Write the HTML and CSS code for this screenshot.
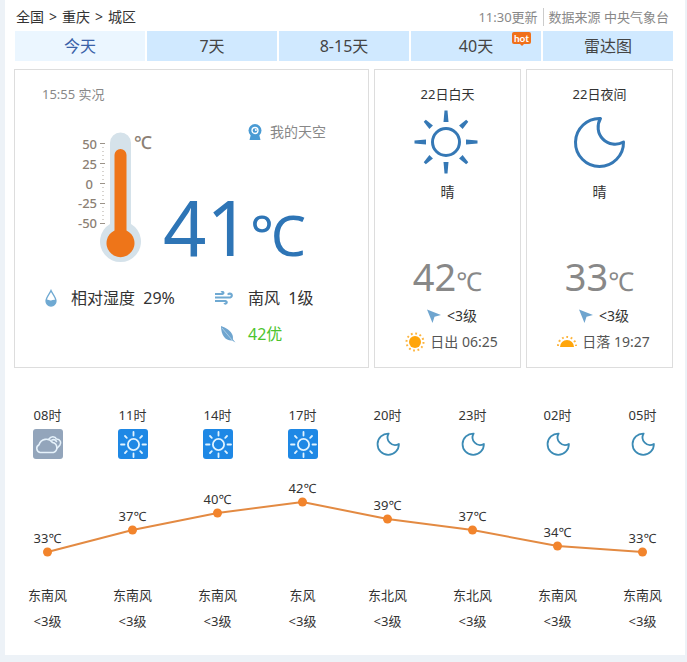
FILE: index.html
```html
<!doctype html>
<html lang="zh-CN">
	<head>
		<meta charset="utf-8" />
		<meta name="viewport" content="width=device-width, initial-scale=1" />
		<title>重庆天气</title>
		<link rel="stylesheet" href="styles.css">
	</head>
	<body>
		<!-- shared icon shapes -->
		<svg class="defs" width="0" height="0">
			<symbol id="sun" viewBox="-32 -32 64 64">
				<circle r="13.5" fill="none" stroke="currentColor" stroke-width="3" />
				<g fill="currentColor">
					<path id="ray" d="M-1.500-31.500h3l1 11.500h-5z" />
					<use href="#ray" transform="rotate(90)" />
					<use href="#ray" transform="rotate(180)" />
					<use href="#ray" transform="rotate(270)" />
					<path id="ray2" d="M-1.500-30h3l1 9h-5z" transform="rotate(45)" />
					<use href="#ray2" transform="rotate(90)" />
					<use href="#ray2" transform="rotate(180)" />
					<use href="#ray2" transform="rotate(270)" />
				</g>
			</symbol>
			<symbol id="moon" viewBox="-27 -27 54 54">
				<path d="M1.500-23.500A24 24 0 1 0 24.500 0A17 17 0 0 1 1.500-23.500z" fill="none" stroke="currentColor" stroke-width="3" stroke-linejoin="round" />
			</symbol>
			<symbol id="moon-thin" viewBox="-27 -27 54 54">
				<path d="M1.500-23.500A24 24 0 1 0 24.500 0A17 17 0 0 1 1.500-23.500z" fill="none" stroke="currentColor" stroke-width="4" stroke-linejoin="round" />
			</symbol>
			<symbol id="sun-tile" viewBox="0 0 30 30">
				<rect width="30" height="30" rx="3" fill="#1e88e5" />
				<g transform="translate(15.500 15.500)" fill="none" stroke="#e0f3ff" stroke-width="1.800" stroke-linecap="round">
					<circle r="5.600" />
					<path d="M0-12.500v3.500M0 12.500v-3.500M-12.500 0h3.500M12.500 0h-3.500M-8.500-8.500l1.800 1.800M8.500-8.500l-1.800 1.800M-8.500 8.500l1.800-1.800M8.500 8.500l-1.800-1.800" />
				</g>
			</symbol>
			<symbol id="cloud-tile" viewBox="0 0 30 30">
				<rect width="30" height="30" rx="3" fill="#93a5bb" />
				<g fill="none" stroke="#e6f2fb" stroke-width="1.600" stroke-linejoin="round" stroke-linecap="round">
					<path d="M7 23.500a4.200 4.200 0 0 1-1-7.800a7.600 7.600 0 0 1 13.500-2.200a5.200 5.200 0 0 1 1 10z" />
					<path d="M16 10c1.800-2.800 6-3 7.500 0c3.800.2 5.300 3.700 3.300 6.300l-2.300 2.500" />
					<path d="M19 11c2-.8 3.500-.2 4.500 1.500" />
				</g>
			</symbol>
			<symbol id="arrow" viewBox="0 0 16 16">
				<path d="M1 1.500l14 5.500-6.500 1.800L6.500 15z" fill="#6fa5cf" />
			</symbol>
		</svg>

		<div class="panel">
			<header class="top">
				<div class="crumbs">
					<a href="#">全国</a><span>&gt;</span><a href="#">重庆</a><span>&gt;</span><a href="#">城区</a>
				</div>
				<div class="source"><span class="updated">11:30更新</span>数据来源 中央气象台</div>
			</header>

			<nav class="tabs">
				<a class="active" href="#">今天</a>
				<a href="#">7天</a>
				<a href="#">8-15天</a>
				<a href="#">40天<span class="hot">hot</span></a>
				<a href="#">雷达图</a>
			</nav>

			<div class="cards">
				<section class="card now">
					<p class="time">15:55 实况</p>
					<div class="reading">
						<svg class="thermometer" viewBox="0 0 88 136" width="88" height="136">
							<path d="M40 12a10.500 10.500 0 0 1 21 0v81a20.500 20.500 0 1 1-21 0z" fill="#d5e2ea" />
							<path d="M44.500 24a6 6 0 0 1 12 0v75.500a14 14 0 1 1-12 0z" fill="#ee7519" />
							<g stroke="#9b9389" stroke-width="1">
								<path d="M30 12.500h5M30 32.500h5M30 52.500h5M30 72.500h5M30 92.500h5" />
								<path d="M32 16.500h2M32 20.500h2M32 24.500h2M32 28.500h2M32 36.500h2M32 40.500h2M32 44.500h2M32 48.500h2M32 56.500h2M32 60.500h2M32 64.500h2M32 68.500h2M32 76.500h2M32 80.500h2M32 84.500h2M32 88.500h2" opacity=".4" />
							</g>
							<g class="scale">
								<text x="27" y="18">50</text>
								<text x="27" y="38">25</text>
								<text x="23" y="58">0</text>
								<text x="27" y="77">-25</text>
								<text x="27" y="97">-50</text>
							</g>
							<text class="unit" x="64" y="18">℃</text>
						</svg>
						<div class="value">
							<a class="sky" href="#">
								<svg viewBox="0 0 14 16" width="14" height="16">
									<path d="M3 10h8l1.500 6h-11z" fill="#4a9bd4" />
									<circle cx="7" cy="6.500" r="6.500" fill="#4a9bd4" />
									<circle cx="7" cy="6.500" r="3" fill="#4a9bd4" stroke="#fff" stroke-width="1.300" />
									<circle cx="7.800" cy="6" r="1" fill="#fff" />
								</svg>
								我的天空
							</a>
							<div class="big">41<small>℃</small></div>
						</div>
					</div>
					<div class="details">
						<div class="item">
							<svg viewBox="0 0 12 18" width="12" height="18">
								<path d="M6 1.500C4.500 5 1 8.500 1 12a5 5 0 0 0 10 0C11 8.500 7.500 5 6 1.500z" fill="#fff" stroke="#6fa9d2" stroke-width="1.300" />
								<path d="M1 11c1.800-1.300 3 1 5 .5c1.600-.4 3-1.300 5-.5v1a5 5 0 0 1-10 0z" fill="#6fa9d2" />
							</svg>
							<span>相对湿度&nbsp; 29%</span>
						</div>
						<div class="item">
							<svg viewBox="0 0 19 14" width="19" height="14">
								<g fill="none" stroke="#6fa9d2" stroke-width="2.200">
									<path d="M0 3h7.500a1 1 0 1 0-1-1.500" />
									<path d="M0 6.500h15.200a2 2 0 1 0-2.200-2.800" />
									<path d="M0 10h10.500a1.300 1.300 0 1 1-1.200 2" />
								</g>
							</svg>
							<span>南风&nbsp; 1级</span>
						</div>
						<div class="item air">
							<svg viewBox="0 0 16 17" width="16" height="17">
								<path d="M1 0c5 1.500 10 5 11.500 9c.8 2.200.3 3.800.5 4.500l2.500 3-3.500-2C6 15 1 10 1 0z" fill="#6fa5cf" />
								<path d="M2 2l10.500 12.500" stroke="#b9d6ea" stroke-width=".8" />
							</svg>
							<a href="#">42优</a>
						</div>
					</div>
				</section>

				<section class="card half">
					<h2>22日白天</h2>
					<svg class="weather" width="64" height="64"><use href="#sun" /></svg>
					<p class="desc">晴</p>
					<p class="temp">42<small>℃</small></p>
					<p class="wind"><svg width="16" height="16"><use href="#arrow" /></svg>&lt;3级</p>
					<p class="rise">
						<svg viewBox="-10 -10 20 20" width="20" height="20">
							<circle r="6" fill="#ffa50a" />
							<circle r="8.500" fill="none" stroke="#fdb43c" stroke-width="2" stroke-dasharray="1.800 2.650" />
						</svg>
						日出 06:25
					</p>
				</section>

				<section class="card half">
					<h2>22日夜间</h2>
					<svg class="weather" width="64" height="64" viewBox="0 0 64 64"><use href="#moon" x="6" y="5" width="54" height="54" /></svg>
					<p class="desc">晴</p>
					<p class="temp">33<small>℃</small></p>
					<p class="wind"><svg width="16" height="16"><use href="#arrow" /></svg>&lt;3级</p>
					<p class="rise">
						<svg viewBox="-10 -10 20 20" width="20" height="20">
							<path d="M-7 5a7 7 0 0 1 14 0z" fill="#ffa50a" />
							<path d="M-9 4a9 9 0 0 1 18 0" fill="none" stroke="#fdb43c" stroke-width="2" stroke-dasharray="1.800 2.650" />
						</svg>
						日落 19:27
					</p>
				</section>
			</div>

			<div class="hourly">
				<ul class="hours">
					<li>08时<svg width="30" height="30"><use href="#cloud-tile" /></svg></li>
					<li>11时<svg width="30" height="30"><use href="#sun-tile" /></svg></li>
					<li>14时<svg width="30" height="30"><use href="#sun-tile" /></svg></li>
					<li>17时<svg width="30" height="30"><use href="#sun-tile" /></svg></li>
					<li>20时<svg class="night" viewBox="0 0 30 30" width="30" height="30"><use href="#moon-thin" x="3" y="3" width="24" height="24" /></svg></li>
					<li>23时<svg class="night" viewBox="0 0 30 30" width="30" height="30"><use href="#moon-thin" x="3" y="3" width="24" height="24" /></svg></li>
					<li>02时<svg class="night" viewBox="0 0 30 30" width="30" height="30"><use href="#moon-thin" x="3" y="3" width="24" height="24" /></svg></li>
					<li>05时<svg class="night" viewBox="0 0 30 30" width="30" height="30"><use href="#moon-thin" x="3" y="3" width="24" height="24" /></svg></li>
				</ul>
				<svg class="chart" width="100%" height="90">
					<g class="line">
						<line x1="6.250%" y1="77" x2="18.750%" y2="55" />
						<line x1="18.750%" y1="55" x2="31.250%" y2="38" />
						<line x1="31.250%" y1="38" x2="43.750%" y2="27" />
						<line x1="43.750%" y1="27" x2="56.250%" y2="44" />
						<line x1="56.250%" y1="44" x2="68.750%" y2="55" />
						<line x1="68.750%" y1="55" x2="81.250%" y2="71" />
						<line x1="81.250%" y1="71" x2="93.750%" y2="77" />
					</g>
					<g class="dots">
						<circle cx="6.250%" cy="77" r="4.500" />
						<circle cx="18.750%" cy="55" r="4.500" />
						<circle cx="31.250%" cy="38" r="4.500" />
						<circle cx="43.750%" cy="27" r="4.500" />
						<circle cx="56.250%" cy="44" r="4.500" />
						<circle cx="68.750%" cy="55" r="4.500" />
						<circle cx="81.250%" cy="71" r="4.500" />
						<circle cx="93.750%" cy="77" r="4.500" />
					</g>
					<text x="6.250%" y="68">33℃</text>
					<text x="18.750%" y="46">37℃</text>
					<text x="31.250%" y="29">40℃</text>
					<text x="43.750%" y="18">42℃</text>
					<text x="56.250%" y="35">39℃</text>
					<text x="68.750%" y="46">37℃</text>
					<text x="81.250%" y="62">34℃</text>
					<text x="93.750%" y="68">33℃</text>
				</svg>
				<ul class="winds">
					<li>东南风<span>&lt;3级</span></li>
					<li>东南风<span>&lt;3级</span></li>
					<li>东南风<span>&lt;3级</span></li>
					<li>东风<span>&lt;3级</span></li>
					<li>东北风<span>&lt;3级</span></li>
					<li>东北风<span>&lt;3级</span></li>
					<li>东南风<span>&lt;3级</span></li>
					<li>东南风<span>&lt;3级</span></li>
				</ul>
			</div>
		</div>
	</body>
</html>
```
FILE: styles.css
```css
* {
	box-sizing: border-box;
}
body {
	margin: 0;
	background-color: #edf2f7;
	color: #333;
	font-family: "Noto Sans", "Noto Sans CJK SC", sans-serif;
	font-size: 13px;
	line-height: 20px;
}
a {
	color: inherit;
	text-decoration: none;
}
p, h2, ul {
	margin: 0;
	padding: 0;
}
ul {
	list-style: none;
}
.defs {
	position: absolute;
}
.panel {
	background-color: #fff;
	margin: 0 2px 7px 5px;
	padding-bottom: 24px;
}

/* header */
.top {
	display: flex;
	justify-content: space-between;
	padding: 7px 16px 4px 11px;
}
.crumbs {
	font-size: 14px;
}
.crumbs span {
	margin: 0 5px;
}
.source {
	color: #888;
}
.updated {
	border-right: 1px solid #ccc;
	margin-right: 5px;
	padding-right: 5px;
}
.tabs {
	display: flex;
	gap: 2px;
	margin: 0 12px 8px 10px;
}
.tabs a {
	flex: 1;
	position: relative;
	background-color: #d0e9ff;
	color: #444;
	font-size: 16px;
	line-height: 30px;
	text-align: center;
}
.tabs a.active {
	background-color: #ebf6ff;
	color: #3a62a8;
}
.hot {
	position: absolute;
	top: 1px;
	right: 10px;
	background-color: #f0701a;
	border-radius: 2px;
	color: #fff;
	font-family: Lato, sans-serif;
	font-size: 10px;
	font-weight: bold;
	line-height: 12px;
	padding: 0 2px;
}
.hot::after {
	content: "";
	position: absolute;
	top: 12px;
	left: 8px;
	border: 2px solid transparent;
	border-top-color: #f0701a;
}

/* cards */
.cards {
	display: grid;
	grid-template-columns: 355fr 147fr 147fr;
	gap: 5px;
	margin: 0 12px 0 9px;
}
.card {
	border: 1px solid #ddd;
}
.now {
	padding: 14px 0 23px;
}
.time {
	color: #888;
	margin-left: 27px;
}
.reading {
	display: flex;
	margin: 18px 42px 0 55px;
}
.thermometer {
	flex: none;
	margin-top: 9px;
}
.scale {
	fill: #8b8074;
	font-size: 13px;
	font-weight: 500;
	text-anchor: end;
}
.unit {
	fill: #8b8074;
	font-size: 18px;
	font-weight: 500;
}
.value {
	flex: 1;
	margin-left: 5px;
}
.sky {
	display: flex;
	align-items: center;
	justify-content: flex-end;
	gap: 8px;
	color: #888;
	font-size: 14px;
}
.big {
	color: #2e75b6;
	font-size: 76px;
	line-height: 80px;
	margin-top: 45px;
	white-space: nowrap;
}
.big small {
	font-size: 56px;
}
.details {
	display: grid;
	grid-template-columns: 170px 1fr;
	row-gap: 16px;
	margin: 14px 0 0 30px;
	font-size: 16px;
}
.item {
	display: flex;
	align-items: center;
	gap: 14px;
}
.item svg:first-child {
	flex: none;
}
.air {
	grid-column: 2;
	gap: 12px;
	padding-left: 5px;
}
.air a {
	color: #4bc42d;
}
.half {
	display: flex;
	flex-direction: column;
	align-items: center;
	padding-top: 14px;
}
.half h2 {
	font-size: 13px;
	font-weight: normal;
}
.weather {
	color: #3578b5;
	margin: 6px 4px 8px 0;
}
.desc {
	font-size: 14px;
}
.temp {
	color: #888;
	font-size: 38px;
	line-height: 50px;
	margin-top: 49px;
}
.temp small {
	font-size: 26px;
}
.wind, .rise {
	display: flex;
	align-items: center;
	gap: 5px;
	padding-left: 8px;
	font-size: 14px;
}
.rise {
	color: #555;
	margin-top: 6px;
}

/* hourly forecast */
.hours, .winds {
	display: grid;
	grid-template-columns: repeat(8, 1fr);
	text-align: center;
}
.hours {
	margin-top: 37px;
}
.hours svg {
	display: block;
	margin: 4px auto 0;
}
.night {
	color: #3c8bb5;
}
.chart {
	display: block;
	margin-top: 16px;
}
.line {
	stroke: #e38a42;
	stroke-width: 2;
}
.dots {
	fill: #f2842c;
}
.chart text {
	fill: #333;
	text-anchor: middle;
}
.winds {
	margin-top: 20px;
}
.winds span {
	display: block;
	margin-top: 6px;
}
```
